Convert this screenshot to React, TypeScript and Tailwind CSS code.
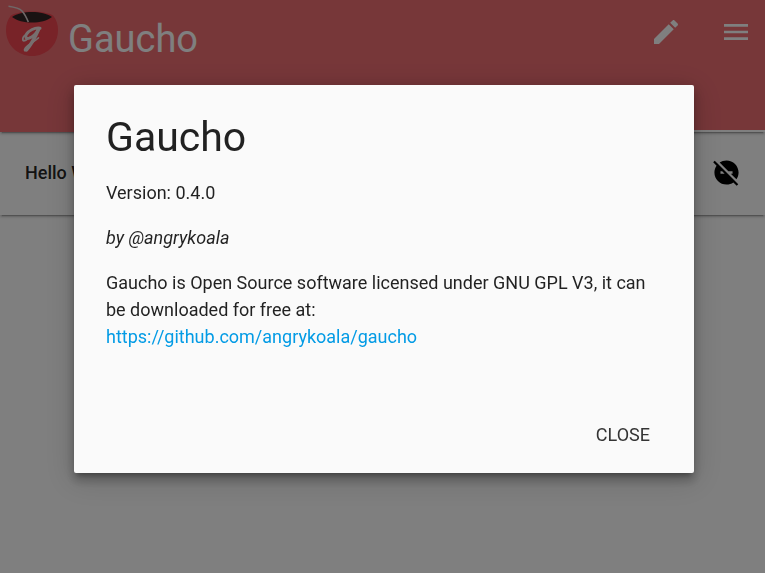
import React from "react";

function MateLogo() {
  return (
    <svg width="60" height="60" viewBox="0 0 60 60" aria-hidden="true">
      <path
        d="M11 15.500C7.500 19.500 6 24.500 6 30c0 15.500 12 26 26 26s26-10.500 26-26c0-5.500-1.500-10.500-5-14.500C49 13 40 11.500 32 11.500s-17 1.500-21 4z"
        fill="#f04650"
      />
      <path d="M12 17c5-3.500 12-5 20-5s15 1.500 20 5c-5 3.800-12 5.600-20 5.600S17 20.800 12 17z" fill="#332425" />
      <path
        d="M8.500 6.300c6 .9 11 2.200 13.500 4.700 2.700 2.900 4.500 6.600 6.300 11"
        fill="none"
        stroke="#ded0d0"
        strokeWidth="1.600"
      />
      <g fill="none" stroke="#eedede" strokeLinecap="round" strokeLinejoin="round">
        <path d="M40 28.200c-5.500-.8-11 2.300-13.500 6-1.800 2.800-.3 5 2.700 4 3.300-1.200 6.800-4.700 8.800-8" strokeWidth="3" />
        <path d="M38.500 29.500c-3 7-7 14.500-12 20.500" strokeWidth="3.400" />
        <path d="M26.500 50c-2 1.500-2.700.3-1.300-1.700 2.500-3.500 8.300-6.300 13.300-10.500" strokeWidth="1.600" />
        <path d="M26 34.500c-2.300 1.500-3.500 3.500-3.100 5.500.6 1.200 2.200.8 3.600-.2" strokeWidth="1.800" />
      </g>
    </svg>
  );
}

function Icon({ path, className }: { path: string; className: string }) {
  return (
    <svg viewBox="0 0 24 24" fill="currentColor" className={className} aria-hidden="true">
      <path d={path} />
    </svg>
  );
}

const PENCIL =
  "M3 17.25V21h3.75L17.81 9.94l-3.75-3.75L3 17.25zM20.71 7.04c.39-.39.39-1.02 0-1.41l-2.34-2.34c-.39-.39-1.02-.39-1.41 0l-1.83 1.83 3.75 3.75 1.83-1.83z";
const MENU = "M3 18h18v-2H3v2zm0-5h18v-2H3v2zm0-7v2h18V6H3z";
const DISABLED =
  "M17 11v2h-1.46l4.68 4.68C21.34 16.07 22 14.11 22 12c0-5.52-4.48-10-10-10-2.11 0-4.07.66-5.68 1.78L13.54 11H17zM2.27 2.27L1 3.54l2.78 2.78C2.66 7.93 2 9.89 2 12c0 5.52 4.48 10 10 10 2.11 0 4.07-.66 5.68-1.78L20.46 23l1.27-1.27L11 11 2.27 2.27zM7 13v-2h1.46l2 2H7z";

export default function App() {
  return (
    <div className="min-h-screen bg-white font-['Roboto',sans-serif] text-lg text-black/87">
      <header className="relative z-10 flex h-33 flex-col justify-between bg-[#ee6e73] text-white shadow-[0_2px_2px_0_rgba(0,0,0,0.14),0_1px_5px_0_rgba(0,0,0,0.12),0_3px_1px_-2px_rgba(0,0,0,0.2)]">
        <div className="flex items-start justify-between pr-[13px]">
          <div className="flex">
            <MateLogo />
            <span className="pt-2 pl-2 text-[38px] leading-[62px]">Gaucho</span>
          </div>
          <div className="flex gap-[38px] pt-4">
            <button type="button" aria-label="Edit">
              <Icon path={PENCIL} className="size-8" />
            </button>
            <button type="button" aria-label="Menu">
              <Icon path={MENU} className="size-8" />
            </button>
          </div>
        </div>
        <div className="ml-auto h-0.5 w-1/4 bg-white" />
      </header>

      <main>
        <div className="flex h-[83px] items-center justify-between pr-6 pb-0.5 pl-[25px] shadow-[0_2px_2px_0_rgba(0,0,0,0.14),0_1px_5px_0_rgba(0,0,0,0.12),0_3px_1px_-2px_rgba(0,0,0,0.2)]">
          <span className="font-medium">Hello World</span>
          <button type="button" aria-label="Enable task" className="text-black">
            <Icon path={DISABLED} className="size-[29px]" />
          </button>
        </div>
      </main>

      <div className="fixed inset-0 z-20 flex items-start bg-black/50 pt-[85px] pr-[71px] pl-[74px]">
        <section
          role="dialog"
          aria-modal="true"
          aria-labelledby="about-title"
          className="w-full rounded-xs bg-[#fafafa] shadow-[0_8px_10px_1px_rgba(0,0,0,0.14),0_3px_14px_2px_rgba(0,0,0,0.12),0_6px_30px_5px_rgba(0,0,0,0.12),0_5px_5px_-3px_rgba(0,0,0,0.3)]"
        >
          <div className="px-8 pt-7 pb-[47px] leading-[27px]">
            <h4 id="about-title" className="mb-[18px] text-[41px] leading-[48px]">
              Gaucho
            </h4>
            <p className="mb-[18px]">Version: 0.4.0</p>
            <p className="mb-[18px] italic">by @angrykoala</p>
            <p>
              Gaucho is Open Source software licensed under GNU GPL V3, it can be downloaded for free at:
              <br />
              <a href="https://github.com/angrykoala/gaucho" className="text-[#039be5]">
                https://github.com/angrykoala/gaucho
              </a>
            </p>
          </div>
          <footer className="flex justify-end px-2 pt-5 pb-5">
            <button type="button" className="px-9 leading-9 text-[#343434] uppercase">
              Close
            </button>
          </footer>
        </section>
      </div>
    </div>
  );
}
